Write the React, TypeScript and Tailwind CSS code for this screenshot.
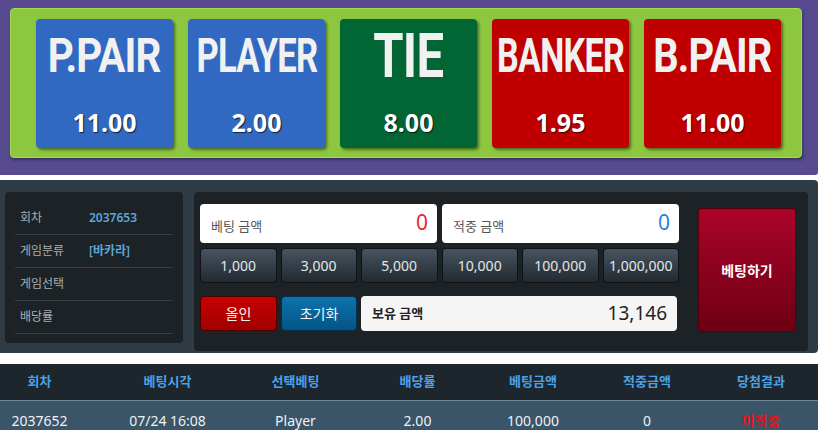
import React from "react";

type Odd = { label: string; rate: string; bg: string; size: string; scale: string };

const odds: Odd[] = [
  { label: "P.PAIR", rate: "11.00", bg: "bg-[#3169c2]", size: "text-[48px]", scale: "scale-x-[0.84]" },
  { label: "PLAYER", rate: "2.00", bg: "bg-[#3169c2]", size: "text-[48px]", scale: "scale-x-[0.72]" },
  { label: "TIE", rate: "8.00", bg: "bg-[#016633]", size: "text-[62px]", scale: "scale-x-[0.79]" },
  { label: "BANKER", rate: "1.95", bg: "bg-[#c00000]", size: "text-[48px]", scale: "scale-x-[0.71]" },
  { label: "B.PAIR", rate: "11.00", bg: "bg-[#c00000]", size: "text-[48px]", scale: "scale-x-[0.83]" },
];

const chips = ["1,000", "3,000", "5,000", "10,000", "100,000", "1,000,000"];

const info = [
  { k: "회차", v: "2037653" },
  { k: "게임분류", v: "[바카라]" },
  { k: "게임선택", v: "" },
  { k: "배당률", v: "" },
];

const cols = ["회차", "베팅시각", "선택베팅", "배당률", "베팅금액", "적중금액", "당첨결과"];

function OddCard({ o }: { o: Odd }) {
  return (
    <div
      className={`${o.bg} w-[137px] h-[129px] rounded-[4px] shadow-[2px_2px_3px_rgba(0,0,0,0.45)] flex flex-col items-center`}
    >
      <div className="h-[74px] flex items-center justify-center w-full">
        <span
          className={`${o.size} ${o.scale} font-bold text-[#f1f1f1] tracking-[-1px] leading-none whitespace-nowrap`}
          style={{ fontFamily: "Roboto, sans-serif" }}
        >
          {o.label}
        </span>
      </div>
      <div className="mt-[17px] text-[25px] font-bold text-white leading-none [text-shadow:1px_1px_1px_rgba(0,0,0,0.7)]">
        {o.rate}
      </div>
    </div>
  );
}

export default function App() {
  return (
    <div
      className="w-[835px] h-[430px] overflow-hidden bg-white"
      style={{ fontFamily: '"Noto Sans", "Noto Sans CJK KR", sans-serif' }}
    >
      {/* odds board */}
      <div className="w-[818px] h-[175px] bg-[#574a8f] rounded-br-[3px] pt-[8px] pl-[10px]">
        <div className="w-[792px] h-[150px] bg-[#8dc63f] border border-[#a5d85c] rounded-[4px] shadow-[1px_2px_3px_rgba(0,0,0,0.35)] flex gap-[15px] pt-[10px] pl-[25px]">
          {odds.map((o) => (
            <OddCard key={o.label} o={o} />
          ))}
        </div>
      </div>

      {/* betting panel */}
      <div className="mt-[5px] w-[818px] h-[173px] bg-[#2f3c46] rounded-r-[4px] pt-[12px] pl-[5px] pr-[10px] flex gap-[11px]">
        <div className="w-[178px] h-[151px] bg-[#1c2226] rounded-[4px] px-[10px] pt-[10px]">
          {info.map((r) => (
            <div key={r.k} className="h-[33px] flex items-center border-b border-[#363e44] pl-[5px] text-[12px]">
              <span className="w-[69px] text-[#a9afb4]">{r.k}</span>
              <span className="text-[#5ea6d6] font-semibold">{r.v}</span>
            </div>
          ))}
        </div>

        <div className="flex-1 h-[159px] bg-[#1c2226] rounded-[4px] pl-[6px] pt-[12px] pr-[12px] flex">
          <div className="w-[479px] flex flex-col">
            <div className="flex gap-[5px] h-[39px]">
              <div className="w-[237px] bg-white rounded-[4px] relative">
                <span className="absolute left-[11px] bottom-[7px] text-[13px] text-[#555]">베팅 금액</span>
                <span className="absolute right-[9px] top-[3px] text-[21px] text-[#e42a2a]">0</span>
              </div>
              <div className="flex-1 bg-white rounded-[4px] relative">
                <span className="absolute left-[11px] bottom-[7px] text-[13px] text-[#555]">적중 금액</span>
                <span className="absolute right-[9px] top-[3px] text-[21px] text-[#2a7fe0]">0</span>
              </div>
            </div>
            <div className="mt-[5px] flex gap-[4px] h-[35px]">
              {chips.map((c) => (
                <button
                  key={c}
                  className="w-[77px] rounded-[4px] border border-[#0f1317] bg-gradient-to-b from-[#47545f] to-[#232b32] text-[14px] text-[#e2e6e9]"
                >
                  {c}
                </button>
              ))}
            </div>
            <div className="mt-[13px] flex gap-[4px] h-[35px]">
              <button className="w-[77px] rounded-[4px] border border-[#4c0000] bg-gradient-to-b from-[#c80000] to-[#a10000] text-[14px] text-[#f3f3f3]">
                올인
              </button>
              <button className="w-[76px] rounded-[4px] border border-[#03324f] bg-gradient-to-b from-[#0d73ad] to-[#045585] text-[14px] text-[#f3f3f3]">
                초기화
              </button>
              <div className="w-[316px] bg-[#f5f5f5] rounded-[4px] flex items-center justify-between pl-[11px] pr-[10px]">
                <span className="text-[13px] font-semibold text-[#222]">보유 금액</span>
                <span className="text-[19px] text-[#222]">13,146</span>
              </div>
            </div>
          </div>
          <div className="ml-[19px] mt-[4px] w-[98px] h-[124px] rounded-[3px] border border-[#52000f] bg-gradient-to-b from-[#ab0429] to-[#6d0014] flex items-center justify-center">
            <span className="text-[14px] font-bold text-white">베팅하기</span>
          </div>
        </div>
      </div>

      {/* bet history */}
      <div className="mt-[11px] w-[818px]">
        <div className="grid grid-cols-[103px_129px_127px_117px_114px_114px_114px] h-[37px] bg-[#1d252d] border-b border-[#71889a] items-center text-[13px] font-bold text-[#4aa3e8] text-center">
          {cols.map((c, i) => (
            <div key={c} className={i === 0 ? "pr-[24px]" : ""}>
              {c}
            </div>
          ))}
        </div>
        <div className="grid grid-cols-[103px_129px_127px_117px_114px_114px_114px] h-[38px] bg-[#3a5468] items-center text-[14px] text-[#eef2f5] text-center">
          <div className="pr-[24px]">2037652</div>
          <div>07/24 16:08</div>
          <div>Player</div>
          <div>2.00</div>
          <div>100,000</div>
          <div>0</div>
          <div className="text-[#e3141c] font-semibold">미적중</div>
        </div>
      </div>
    </div>
  );
}
